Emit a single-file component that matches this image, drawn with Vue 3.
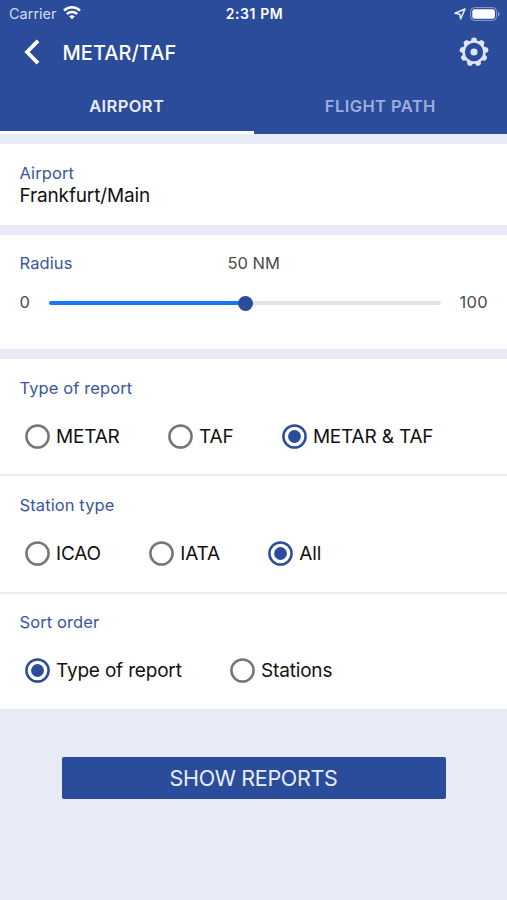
<script setup>
import { ref } from 'vue'

const tab = ref('airport')
const radius = ref(50)
const teeth = Array.from({ length: 9 }, (_, i) => i * 40)
const groups = ref([
  { id: 'report', title: 'Type of report', options: ['METAR', 'TAF', 'METAR & TAF'], selected: 'METAR & TAF' },
  { id: 'station', title: 'Station type', options: ['ICAO', 'IATA', 'All'], selected: 'All' },
  { id: 'sort', title: 'Sort order', options: ['Type of report', 'Stations'], selected: 'Type of report' },
])
</script>

<template>
  <div class="screen">
    <header class="header">
      <div class="status">
        <div class="carrier">
          <span>Carrier</span>
          <svg class="wifi" width="18" height="14" viewBox="0 0 18 14" fill="none" stroke="#fff" stroke-width="2.4">
            <path d="M1 4.6C5.5.2 12.5.2 17 4.6" />
            <path d="M3.8 8c2.8-2.7 7.6-2.7 10.4 0" />
            <path d="M6.3 10.4c1.4-1.4 4-1.4 5.4 0L9 13.2z" fill="#fff" stroke="none" />
          </svg>
        </div>
        <span class="clock">2:31 PM</span>
        <div class="indicators">
          <svg width="12" height="12" viewBox="0 0 12 12" fill="none" stroke="#e9edfa" stroke-width="1.5" stroke-linejoin="round">
            <path d="M11 1 1 5.3l4.8.9.8 4.8z" />
          </svg>
          <svg width="30" height="14" viewBox="0 0 30 14">
            <rect x=".6" y=".6" width="26" height="12.8" rx="3.8" fill="none" stroke="#8ea0d3" />
            <rect x="2.3" y="2.3" width="22.6" height="9.4" rx="2.2" fill="#fff" />
            <path d="M28 4.7c2 .8 2 3.8 0 4.6z" fill="#8ea0d3" />
          </svg>
        </div>
      </div>
      <div class="nav">
        <svg class="back" width="16" height="26" viewBox="0 0 16 26" fill="none" stroke="#fff" stroke-width="3.8">
          <path d="M14 1.8 3 13l11 11.2" />
        </svg>
        <h1 class="title">METAR/TAF</h1>
        <svg class="gear" width="30" height="30" viewBox="-15 -15 30 30">
          <circle r="10.4" fill="none" stroke="#dfe5f8" stroke-width="2.5" />
          <path
            v-for="a in teeth"
            :key="a"
            d="M-3.3-10.8-2.2-13.9Q0-15.1 2.2-13.9L3.3-10.8z"
            fill="#dfe5f8"
            :transform="`rotate(${a})`"
          />
          <circle r="3.5" fill="#dfe5f8" />
        </svg>
      </div>
      <nav class="tabs">
        <button class="tab" :class="{ active: tab === 'airport' }" @click="tab = 'airport'">AIRPORT</button>
        <button class="tab" :class="{ active: tab === 'path' }" @click="tab = 'path'">FLIGHT PATH</button>
      </nav>
    </header>

    <section class="card airport">
      <span class="label">Airport</span>
      <span class="value">Frankfurt/Main</span>
    </section>

    <section class="card radius">
      <div class="radius-head">
        <span class="label">Radius</span>
        <span class="amount">{{ radius }} NM</span>
      </div>
      <div class="slider">
        <span class="bound">0</span>
        <div class="track">
          <div class="fill" :style="{ width: radius + '%' }"></div>
          <div class="thumb"></div>
        </div>
        <span class="bound">100</span>
      </div>
    </section>

    <div class="groups">
      <section v-for="g in groups" :key="g.id" class="card group">
        <span class="label">{{ g.title }}</span>
        <div class="options">
          <div v-for="o in g.options" :key="o" class="option" @click="g.selected = o">
            <svg class="radio" :class="{ on: g.selected === o }" viewBox="-12.5 -12.5 25 25">
              <circle class="ring" r="11.1" />
              <circle v-if="g.selected === o" class="dot" r="6.4" />
            </svg>
            <span class="option-text">{{ o }}</span>
          </div>
        </div>
      </section>
    </div>

    <button class="submit">SHOW REPORTS</button>
  </div>
</template>

<style>
body {
  margin: 0;
  background: #e8eaf6;
}
</style>

<style scoped>
.screen {
  width: 507px;
  height: 900px;
  overflow: hidden;
  background: #e8eaf6;
  font-family: Inter, "Liberation Sans", sans-serif;
  display: flex;
  flex-direction: column;
  color: #111;
}
button {
  border: 0;
  padding: 0;
  font-family: inherit;
}
.header {
  height: 134px;
  flex: none;
  background: #2b4b9b;
  color: #fff;
}
.status {
  height: 27px;
  padding: 0 7px 0 9px;
  display: grid;
  grid-template-columns: 1fr auto 1fr;
  align-items: center;
  font-size: 14.5px;
}
.carrier {
  display: flex;
  align-items: center;
  gap: 6px;
  color: #d5dcf2;
}
.wifi {
  margin-top: -2px;
}
.clock {
  font-weight: 600;
  font-size: 14px;
  letter-spacing: 0.6px;
}
.indicators {
  display: flex;
  justify-content: flex-end;
  align-items: center;
  gap: 4px;
}
.nav {
  height: 50px;
  padding: 0 18px 0 24px;
  display: flex;
  align-items: center;
}
.title {
  margin: 1px auto 0 22.5px;
  font-size: 20px;
  font-weight: 500;
  line-height: 24px;
  letter-spacing: 0.05px;
}
.tabs {
  height: 57px;
  display: grid;
  grid-template-columns: 1fr 1fr;
}
.tab {
  background: none;
  color: #9badda;
  font-size: 16.5px;
  font-weight: 600;
  letter-spacing: 0.4px;
  border-bottom: 3px solid transparent;
  padding-top: 4px;
}
.tab.active {
  color: #e8edfb;
  border-color: #fff;
}
.card {
  background: #fff;
  padding: 0 19px 0 19.5px;
  box-sizing: border-box;
}
.label {
  color: #3b559f;
  font-size: 16.5px;
  line-height: 22px;
  letter-spacing: 0.1px;
}
.airport {
  margin-top: 10px;
  height: 81px;
  padding-top: 18px;
  display: flex;
  flex-direction: column;
}
.value {
  font-size: 19px;
  line-height: 23px;
  letter-spacing: -0.15px;
}
.radius {
  margin-top: 10px;
  height: 114px;
  padding-top: 17px;
}
.radius-head {
  display: grid;
  grid-template-columns: 1fr auto 1fr;
  line-height: 22px;
}
.amount,
.bound {
  color: #4a4a4a;
  font-size: 16.5px;
}
.bound {
  line-height: 20px;
  margin-bottom: 2px;
}
.slider {
  margin-top: 18px;
  height: 22px;
  display: flex;
  align-items: center;
  justify-content: space-between;
}
.bound:last-child {
  letter-spacing: 0.3px;
}
.track {
  width: 392px;
  height: 4px;
  border-radius: 2px;
  background: #e3e3e5;
  display: flex;
  align-items: center;
}
.fill {
  height: 4px;
  border-radius: 2px;
  background: #1676f3;
}
.thumb {
  width: 15px;
  height: 15px;
  margin-left: -7px;
  border-radius: 50%;
  background: #2b4b9b;
}
.groups {
  margin-top: 10px;
  display: flex;
  flex-direction: column;
  gap: 2px;
}
.group {
  height: 115.3px;
  padding-top: 17.8px;
}
.group .label {
  display: block;
}
.options {
  margin: 25px 0 0 5.5px;
  display: flex;
  gap: 48.4px;
}
.option {
  display: flex;
  align-items: center;
  gap: 6px;
}
.radio {
  width: 25px;
  height: 25px;
  display: block;
}
.ring {
  fill: none;
  stroke: #757575;
  stroke-width: 2.5px;
}
.dot {
  fill: #2b4b9b;
}
.radio.on .ring {
  stroke: #2b4b9b;
}
.option-text {
  font-size: 19px;
  letter-spacing: -0.18px;
  white-space: nowrap;
}
.submit {
  margin: 48px auto 0;
  width: 384px;
  height: 42px;
  border-radius: 2px;
  background: #2b4b9b;
  color: #e8edfb;
  font-size: 21.5px;
  letter-spacing: -0.33px;
}
</style>
